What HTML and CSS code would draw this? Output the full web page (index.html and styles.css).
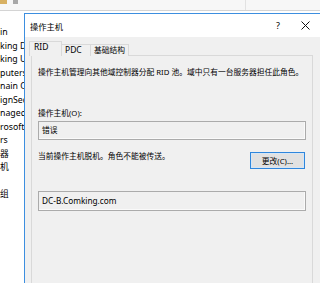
FILE: index.html
```html
<!DOCTYPE html>
<html lang="zh-CN">
<head>
    <meta charset="UTF-8">
    <meta name="viewport" content="width=device-width, initial-scale=1.0">
    <title>操作主机</title>
    <link rel="stylesheet" href="styles.css">
</head>
<body>
    <div class="toolbar">
        <span class="tb-icon folder"></span>
        <span class="tb-icon grey"></span>
        <span class="tb-sep"></span>
    </div>

    <ul class="tree">
        <li>in</li>
        <li>king D</li>
        <li>king U</li>
        <li>puters</li>
        <li>nain Co</li>
        <li>ignSec</li>
        <li>naged S</li>
        <li>rosoft E</li>
        <li>rs</li>
        <li>器</li>
        <li>机</li>
        <li></li>
        <li>组</li>
    </ul>

    <div class="dialog">
        <div class="titlebar">
            <span class="title">操作主机</span>
            <span class="help">?</span>
            <span class="close">
                <svg width="9" height="9" viewBox="0 0 9 9">
                    <path d="M0.5 0.5 L8.5 8.5 M8.5 0.5 L0.5 8.5" stroke="#111" stroke-width="1" fill="none"/>
                </svg>
            </span>
        </div>
        <div class="dialog-body">
            <div class="tabs">
                <div class="tab active latin">RID</div>
                <div class="tab latin">PDC</div>
                <div class="tab wide">基础结构</div>
            </div>
            <div class="tab-panel">
                <p class="desc">操作主机管理向其他域控制器分配 RID 池。域中只有一台服务器担任此角色。</p>
                <div class="field-label">操作主机(O):</div>
                <div class="textbox">错误</div>
                <div class="status-row">
                    <span class="status">当前操作主机脱机。角色不能被传送。</span>
                    <button class="btn">更改(C)...</button>
                </div>
                <div class="textbox server">DC-B.Comking.com</div>
            </div>
        </div>
    </div>
</body>
</html>
```

FILE: styles.css
```css
body {
    margin: 0;
    padding: 0;
    width: 320px;
    height: 283px;
    overflow: hidden;
    background-color: #fff;
    font-family: "Noto Sans", "Noto Sans CJK SC", sans-serif;
    color: #000;
}

.toolbar {
    height: 10px;
    background-color: #f7f7f7;
    border-bottom: 1px solid #d4d4d4;
    display: flex;
    align-items: flex-start;
}
.tb-icon {
    display: block;
    height: 4px;
}
.tb-icon.folder {
    width: 7px;
    background-color: #d8b163;
}
.tb-icon.grey {
    width: 5px;
    margin-left: 6px;
    background-color: #a8a8a8;
}
.tb-sep {
    display: block;
    width: 1px;
    height: 10px;
    margin-left: 227px;
    background-color: #e2e2e2;
}

.tree {
    list-style: none;
    margin: 0;
    padding: 15px 0 0 0;
    font-size: 8.75px;
    line-height: 13.5px;
    white-space: nowrap;
}
.tree li {
    height: 13.5px;
}

.dialog {
    position: absolute;
    left: 24px;
    top: 13px;
    width: 300px;
    height: 269px;
    border-left: 1px solid #3d8fe0;
    border-top: 1px solid #3d8fe0;
    background-color: #f0f0f0;
    z-index: 1;
    display: flex;
    flex-direction: column;
}

.titlebar {
    height: 23px;
    flex: none;
    background-color: #fff;
    display: flex;
    align-items: center;
    padding: 0 13px 0 5px;
    font-size: 8.25px;
}
.titlebar .title {
    flex: 1;
}
.titlebar .help {
    width: 14px;
    text-align: center;
    font-size: 9px;
}
.titlebar .close {
    width: 14px;
    margin-left: 13px;
    display: flex;
    justify-content: center;
}

.dialog-body {
    flex: 1;
    display: flex;
    flex-direction: column;
    padding: 4px 12px 0 6px;
    font-size: 7.75px;
}

.tabs {
    display: flex;
    align-items: flex-end;
    height: 15px;
    flex: none;
    margin-bottom: -1px;
    position: relative;
    z-index: 1;
}
.tab {
    box-sizing: border-box;
    height: 12px;
    width: 31px;
    padding: 0 0 0 4px;
    line-height: 10px;
    white-space: nowrap;
    border: 1px solid #d9d9d9;
    border-bottom: none;
    background-color: #f0f0f0;
}
.tab.latin {
    font-size: 8.5px;
}
.tab.active {
    height: 15px;
    width: 33px;
    margin-left: -2px;
    margin-right: -2px;
    position: relative;
    z-index: 2;
}
.tab.wide {
    width: 39px;
    margin-left: -1px;
    padding-left: 3px;
}

.tab-panel {
    flex: 1;
    border: 1px solid #d9d9d9;
    border-bottom: none;
    padding: 10px 6px 0 6px;
}
.desc {
    margin: 0;
    line-height: 12px;
    white-space: nowrap;
}
.field-label {
    margin-top: 29px;
    line-height: 12px;
}
.textbox {
    box-sizing: border-box;
    height: 19px;
    margin-top: 2px;
    padding-left: 3px;
    line-height: 17px;
    border: 1px solid #ababab;
    box-shadow: inset -1px -1px 0 #fafafa;
    background-color: #f0f0f0;
}
.textbox.server {
    height: 20px;
    line-height: 18px;
    margin-top: 22px;
    font-size: 8.25px;
}
.status-row {
    display: flex;
    justify-content: space-between;
    align-items: flex-start;
    margin-top: 10px;
}
.status {
    line-height: 12px;
}
.btn {
    box-sizing: border-box;
    width: 55px;
    height: 17px;
    margin: 2px 1px 0 0;
    padding: 0;
    font-family: inherit;
    font-size: 7.75px;
    color: #000;
    background-color: #e1e1e1;
    border: 1px solid #2f86dc;
    box-shadow: inset 0 0 0 1px #d6e6f5;
}
```
